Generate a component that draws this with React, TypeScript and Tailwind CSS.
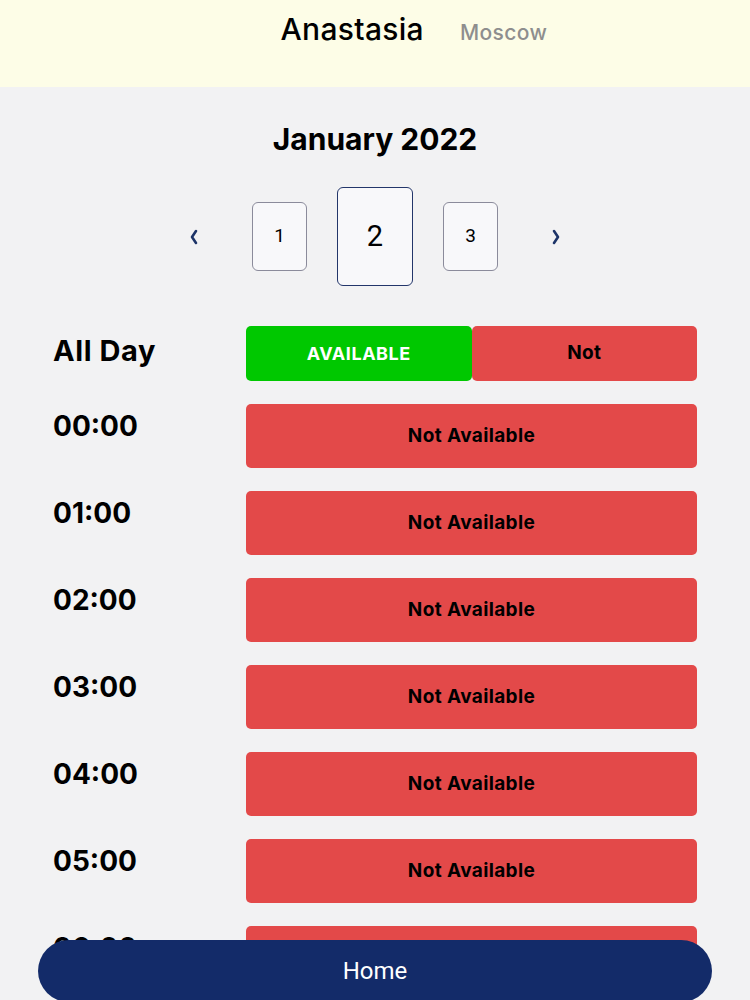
import React from "react";

const hours = ["00:00", "01:00", "02:00", "03:00", "04:00", "05:00", "06:00", "07:00"];

function Chevron({ dir }: { dir: "left" | "right" }) {
  return (
    <svg width="10" height="16" viewBox="0 0 10 16" className="text-[#1d3468]">
      <polyline
        points={dir === "left" ? "7,2 3,8 7,14" : "3,2 7,8 3,14"}
        fill="none"
        stroke="currentColor"
        strokeWidth="2.6"
        strokeLinecap="round"
        strokeLinejoin="round"
      />
    </svg>
  );
}

export default function App() {
  return (
    <div className="min-h-screen bg-[#f2f2f3] font-['Inter',sans-serif] text-black">
      {/* Header */}
      <div className="h-[87px] bg-[#fdfde7] flex justify-center items-baseline gap-9 pl-[78px] pt-[7px]">
        <span className="text-[30px] font-medium tracking-[0.01em]">Anastasia</span>
        <span className="text-[21px] font-medium text-[#8e8e8e] tracking-[0.02em]">Moscow</span>
      </div>

      {/* Month */}
      <div className="flex flex-col items-center">
        <h1 className="mt-[32px] text-[30px] leading-[40px] font-bold">January 2022</h1>

        <div className="mt-[28px] flex items-center font-['Roboto',sans-serif]">
          <button className="w-[20px] flex justify-center mr-[48px]">
            <Chevron dir="left" />
          </button>
          <div className="w-[55px] h-[69px] rounded-[6px] border border-[#8b8b9b] bg-[#f8f8fa] flex items-center justify-center text-[19px]">
            1
          </div>
          <div className="mx-[30px] w-[76px] h-[99px] rounded-[6px] border-[1.5px] border-[#23366a] bg-[#f8f8fa] flex items-center justify-center text-[29px]">
            2
          </div>
          <div className="w-[55px] h-[69px] rounded-[6px] border border-[#8b8b9b] bg-[#f8f8fa] flex items-center justify-center text-[19px]">
            3
          </div>
          <button className="w-[20px] flex justify-center ml-[48px]">
            <Chevron dir="right" />
          </button>
        </div>
      </div>

      {/* Slots */}
      <div className="px-[53px] mt-[40px] pb-[120px] flex flex-col gap-[23px]">
        <div className="flex items-center">
          <div className="w-[193px] pb-[6px] text-[29px] font-bold tracking-[0.02em]">All Day</div>
          <div className="flex-1 flex h-[55px]">
            <button className="flex-1 rounded-[5px] bg-[#00c800] text-white text-[18px] font-bold tracking-[0.03em]">AVAILABLE</button>
            <button className="flex-1 rounded-[5px] bg-[#e34949] text-[19px] font-bold tracking-[0.02em]">Not</button>
          </div>
        </div>

        {hours.map((h) => (
          <div key={h} className="flex items-start">
            <div className="w-[193px] text-[28px] font-bold leading-[44px]">{h}</div>
            <button className="flex-1 h-[64px] rounded-[5px] bg-[#e34949] text-[19px] font-bold tracking-[0.02em]">
              Not Available
            </button>
          </div>
        ))}
      </div>

      {/* Home */}
      <button className="fixed left-[38px] right-[38px] bottom-[-2px] h-[62px] rounded-full bg-[#132b69] text-white text-[24px] font-['Roboto',sans-serif]">
        Home
      </button>
    </div>
  );
}
